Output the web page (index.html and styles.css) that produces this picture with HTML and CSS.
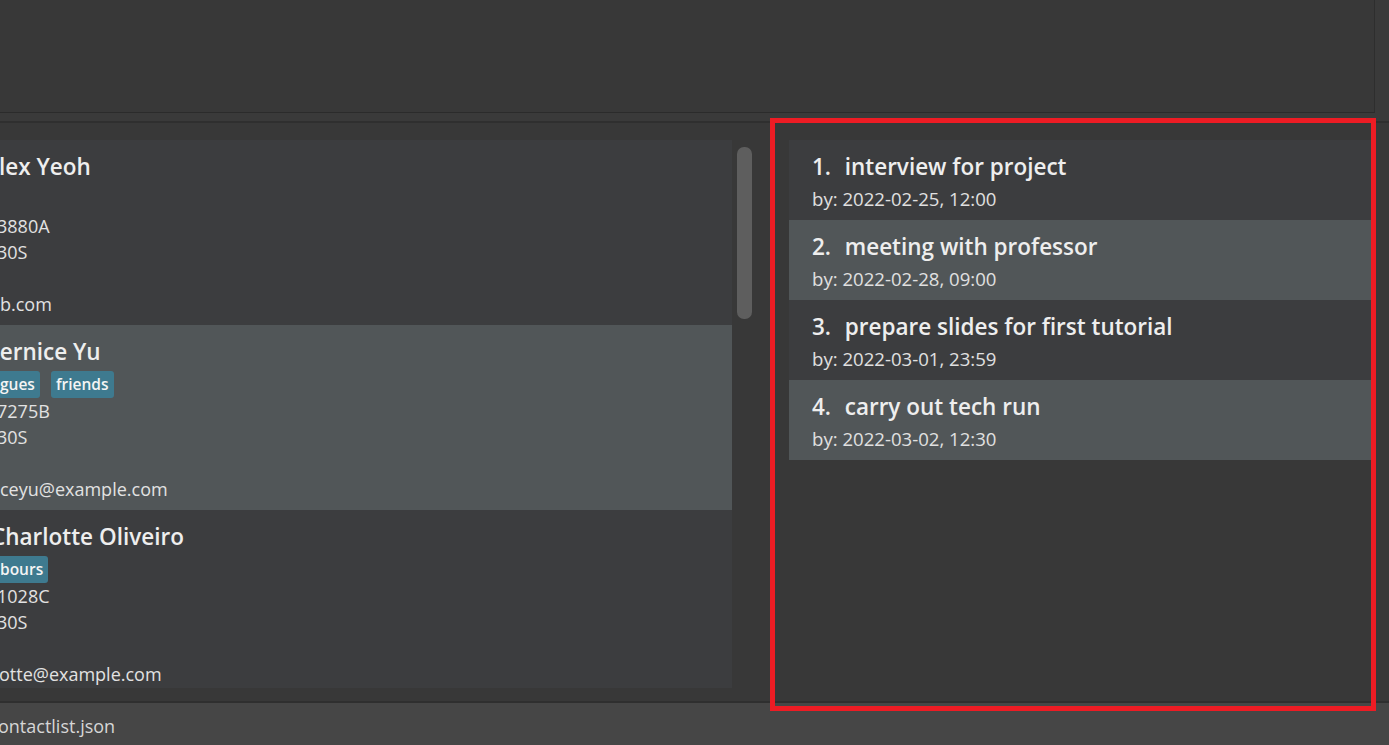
FILE: index.html
```html
<!DOCTYPE html>
<html>
<head>
<meta charset="utf-8">
<link rel="stylesheet" href="styles.css">
</head>
<body>
<div class="app">
  <div class="result-area"><div class="result-box"></div></div>
  <div class="split"></div>
  <div class="main">
    <div class="contacts">
      <div class="contact-list">
        <div class="card">
          <div class="name cut1">lex Yeoh</div>
          <div class="tags"></div>
          <div class="line cut2">3880A</div>
          <div class="line cut2">30S</div>
          <div class="line"></div>
          <div class="line">b.com</div>
        </div>
        <div class="card alt">
          <div class="name cut-b">Bernice Yu</div>
          <div class="tags"><span class="tag first">gues</span><span class="tag">friends</span></div>
          <div class="line cut2">7275B</div>
          <div class="line cut2">30S</div>
          <div class="line"></div>
          <div class="line">ceyu@example.com</div>
        </div>
        <div class="card">
          <div class="name cut-c">Charlotte Oliveiro</div>
          <div class="tags"><span class="tag first">bours</span></div>
          <div class="line cut2">1028C</div>
          <div class="line cut2">30S</div>
          <div class="line"></div>
          <div class="line cut1">otte@example.com</div>
        </div>
      </div>
      <div class="scroll-track"><div class="scroll-thumb"></div></div>
    </div>
    <div class="tasks">
      <div class="task">
        <div class="task-title"><span class="num">1.</span>  interview for project</div>
        <div class="task-by">by: 2022-02-25, 12:00</div>
      </div>
      <div class="task alt">
        <div class="task-title"><span class="num">2.</span>  meeting with professor</div>
        <div class="task-by">by: 2022-02-28, 09:00</div>
      </div>
      <div class="task">
        <div class="task-title"><span class="num">3.</span>  prepare slides for first tutorial</div>
        <div class="task-by">by: 2022-03-01, 23:59</div>
      </div>
      <div class="task alt">
        <div class="task-title"><span class="num">4.</span>  carry out tech run</div>
        <div class="task-by">by: 2022-03-02, 12:30</div>
      </div>
    </div>
  </div>
  <div class="status"><span class="status-text">ontactlist.json</span></div>
</div>
<div class="highlight"></div>
</body>
</html>
```
FILE: styles.css
```css
html, body {
  margin: 0;
  padding: 0;
}
body {
  width: 1389px;
  height: 745px;
  overflow: hidden;
  background: #3a3a3a;
  font-family: "Open Sans", "Noto Sans", sans-serif;
  color: #e6e6e6;
  position: relative;
}
.app {
  display: flex;
  flex-direction: column;
  height: 745px;
}
.result-area {
  height: 113px;
  display: flex;
  background: #3a3a3a;
}
.result-box {
  width: 1374px;
  height: 112px;
  background: #383838;
  border-right: 1px solid #2e2e2e;
  border-bottom: 1px solid #2b2b2b;
}
.split {
  height: 8px;
  background: #3a3a3a;
  border-bottom: 2px solid #2f2f2f;
}
.main {
  height: 578px;
  background: #383838;
  display: flex;
  padding-top: 17px;
  box-sizing: border-box;
}
.contacts {
  display: flex;
  width: 789px;
  flex: none;
}
.contact-list {
  width: 732px;
  height: 548px;
  overflow: hidden;
  flex: none;
}
.card {
  height: 185px;
  background: #3c3d3f;
  padding-top: 12px;
  box-sizing: border-box;
}
.card.alt {
  background: #515658;
}
.name {
  height: 30px;
  line-height: 30px;
  font-size: 22.5px;
  font-weight: 600;
  color: #eeeeee;
  white-space: nowrap;
}
.tags {
  height: 27px;
  margin-top: 4px;
  display: flex;
  gap: 11px;
}
.tag {
  height: 27px;
  line-height: 26px;
  background: #3e7a8f;
  color: #f4f4f4;
  font-size: 15.5px;
  font-weight: 600;
  padding: 0 5px;
  border-radius: 3px;
}
.tag.first {
  padding-left: 0;
  border-top-left-radius: 0;
  border-bottom-left-radius: 0;
}
.line {
  height: 26px;
  line-height: 26px;
  font-size: 18px;
  color: #e2e2e2;
  white-space: nowrap;
}
.cut1 { margin-left: -1px; }
.cut2 { margin-left: -3px; }
.cut-b { margin-left: -15px; }
.cut-c { margin-left: -9px; }
.scroll-track {
  width: 15px;
  margin-left: 5px;
  padding-top: 7px;
}
.scroll-thumb {
  height: 172px;
  background: #5e5e5e;
  border-radius: 7px;
}
.tasks {
  width: 584px;
  flex: none;
}
.task {
  height: 80px;
  background: #3c3d3f;
  padding-left: 23px;
  padding-top: 12px;
  box-sizing: border-box;
}
.task.alt {
  background: #515658;
}
.task-title {
  height: 30px;
  line-height: 30px;
  font-size: 22.5px;
  font-weight: 600;
  color: #eeeeee;
  white-space: pre;
}
.num {
  margin-right: 2px;
}
.task-by {
  height: 34px;
  line-height: 34px;
  font-size: 18.6px;
  color: #e0e0e0;
  white-space: pre;
}
.status {
  flex: 1;
  background: #464646;
  border-top: 2px solid #2f2f2f;
  display: flex;
  align-items: center;
}
.status-text {
  font-size: 18px;
  color: #d6d6d6;
  margin-left: -2px;
  padding-top: 4px;
}
.highlight {
  position: absolute;
  left: 770px;
  top: 118px;
  width: 596px;
  height: 583px;
  border: 5px solid #ed1c24;
}
```
